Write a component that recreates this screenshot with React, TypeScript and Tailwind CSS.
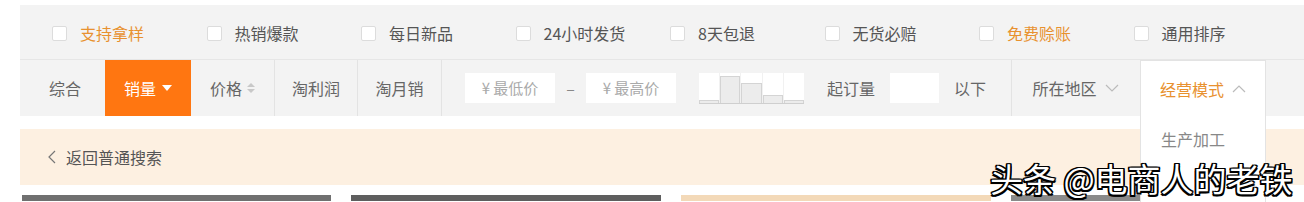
import React from "react";

const font = { fontFamily: '"Noto Sans CJK SC", "Noto Sans", sans-serif' };

function Checkbox() {
  return <span className="inline-block w-[15px] h-[15px] bg-white border border-[#dcdcdc] rounded-[2px] shrink-0" />;
}

const checks: { label: string; orange?: boolean }[] = [
  { label: "支持拿样", orange: true },
  { label: "热销爆款" },
  { label: "每日新品" },
  { label: "24小时发货" },
  { label: "8天包退" },
  { label: "无货必赔" },
  { label: "免费赊账", orange: true },
  { label: "通用排序" },
];

function Histogram() {
  const hs = [3, 27, 20, 8, 3];
  return (
    <div className="flex items-end w-[105px] h-[31px] bg-white border-b border-[#cfcfcf]">
      {hs.map((h, i) => (
        <div key={i} className="flex-1 flex flex-col justify-end h-full border-r border-[#f1f1f1] last:border-r-0">
          <div className="bg-[#ececec] border-t border-x border-[#d4d4d4]" style={{ height: h }} />
        </div>
      ))}
    </div>
  );
}

export default function App() {
  return (
    <div className="relative w-[1304px] h-[202px] bg-white overflow-hidden text-[#666]" style={font}>
      <div className="pt-[5px] pl-[20px]">
        <div className="bg-[#f3f3f3]">
          {/* row 1 */}
          <div className="flex items-center h-[55px] pl-[32px] pt-[2px] border-b border-[#e6e6e6]">
            {checks.map((c) => (
              <div key={c.label} className="flex items-center w-[154.5px] shrink-0 gap-[13px]">
                <Checkbox />
                <span className={`text-[16px] ${c.orange ? "text-[#e8912f]" : "text-[#555]"}`}>{c.label}</span>
              </div>
            ))}
          </div>
          {/* row 2 */}
          <div className="flex items-stretch h-[56px] text-[16px]">
            <div className="w-[85px] flex items-center justify-center pl-[5px]">综合</div>
            <div className="w-[86px] flex items-center justify-center gap-[6px] bg-[#ff7611] text-white">
              <span>销量</span>
              <svg width="10" height="6" viewBox="0 0 10 6"><path d="M0 0h10L5 6z" fill="#fff" /></svg>
            </div>
            <div className="w-[84px] flex items-center justify-center gap-[5px] border-r border-[#e3e3e3]">
              <span>价格</span>
              <svg width="8" height="12" viewBox="0 0 8 12"><path d="M0 5L4 1l4 4zM0 7l4 4 4-4z" fill="#c8c8c8" /></svg>
            </div>
            <div className="w-[83px] flex items-center justify-center border-r border-[#e3e3e3]">淘利润</div>
            <div className="w-[84px] flex items-center justify-center border-r border-[#e3e3e3]">淘月销</div>
            <div className="w-[570px] flex items-center pl-[23px] border-r border-[#e3e3e3]">
              <div className="w-[90px] h-[30px] bg-white flex items-center justify-center text-[#aaa] text-[15px]">¥ 最低价</div>
              <span className="w-[31px] text-center text-[#888]">–</span>
              <div className="w-[90px] h-[30px] bg-white flex items-center justify-center text-[#aaa] text-[15px]">¥ 最高价</div>
              <div className="ml-[23px]"><Histogram /></div>
              <span className="ml-[23px]">起订量</span>
              <div className="ml-[15px] w-[49px] h-[30px] bg-white" />
              <span className="ml-[15px]">以下</span>
            </div>
            <div className="w-[127px] flex items-center justify-center gap-[8px]">
              <span>所在地区</span>
              <svg width="14" height="8" viewBox="0 0 14 8"><path d="M1 1l6 6 6-6" stroke="#bbb" strokeWidth="1.2" fill="none" /></svg>
            </div>
          </div>
        </div>
        <div className="h-[13px]" />
        {/* peach band */}
        <div className="h-[56px] bg-[#fdf0e1] flex items-center pl-[28px] gap-[10px] text-[16px] text-[#555]">
          <svg width="8" height="14" viewBox="0 0 8 14"><path d="M7 1L1 7l6 6" stroke="#777" strokeWidth="1.2" fill="none" /></svg>
          <span>返回普通搜索</span>
        </div>
        {/* card tops */}
        <div className="flex gap-[20px] mt-[10px] pl-[2px]">
          <div className="w-[309px] h-[6px] bg-[#707070]" />
          <div className="w-[310px] h-[6px] bg-[#5e5e5e]" />
          <div className="w-[310px] h-[6px] bg-[#f3d9b8]" />
          <div className="w-[131px] h-[6px] bg-[#8a8a8a]" />
        </div>
      </div>

      {/* dropdown */}
      <div className="absolute left-[1140px] top-[60px] w-[126px] h-[150px] bg-white border border-[#e3e3e3] border-b-0">
        <div className="h-[56px] flex items-center justify-center gap-[8px] text-[16px] text-[#e8912f]">
          <span>经营模式</span>
          <svg width="14" height="8" viewBox="0 0 14 8"><path d="M1 7l6-6 6 6" stroke="#bbb" strokeWidth="1.2" fill="none" /></svg>
        </div>
        <div className="pl-[20px] pt-[10px] text-[16px] text-[#888]">生产加工</div>
      </div>

      {/* watermark */}
      <div className="absolute left-[990px] top-[158px] text-[33px] leading-[40px] text-white whitespace-nowrap [text-shadow:1.5px_1.5px_0_#000,-1.5px_-1.5px_0_#000,1.5px_-1.5px_0_#000,-1.5px_1.5px_0_#000,0_1.5px_0_#000,0_-1.5px_0_#000,1.5px_0_0_#000,-1.5px_0_0_#000]">
        头条 @电商人的老铁
      </div>
    </div>
  );
}
